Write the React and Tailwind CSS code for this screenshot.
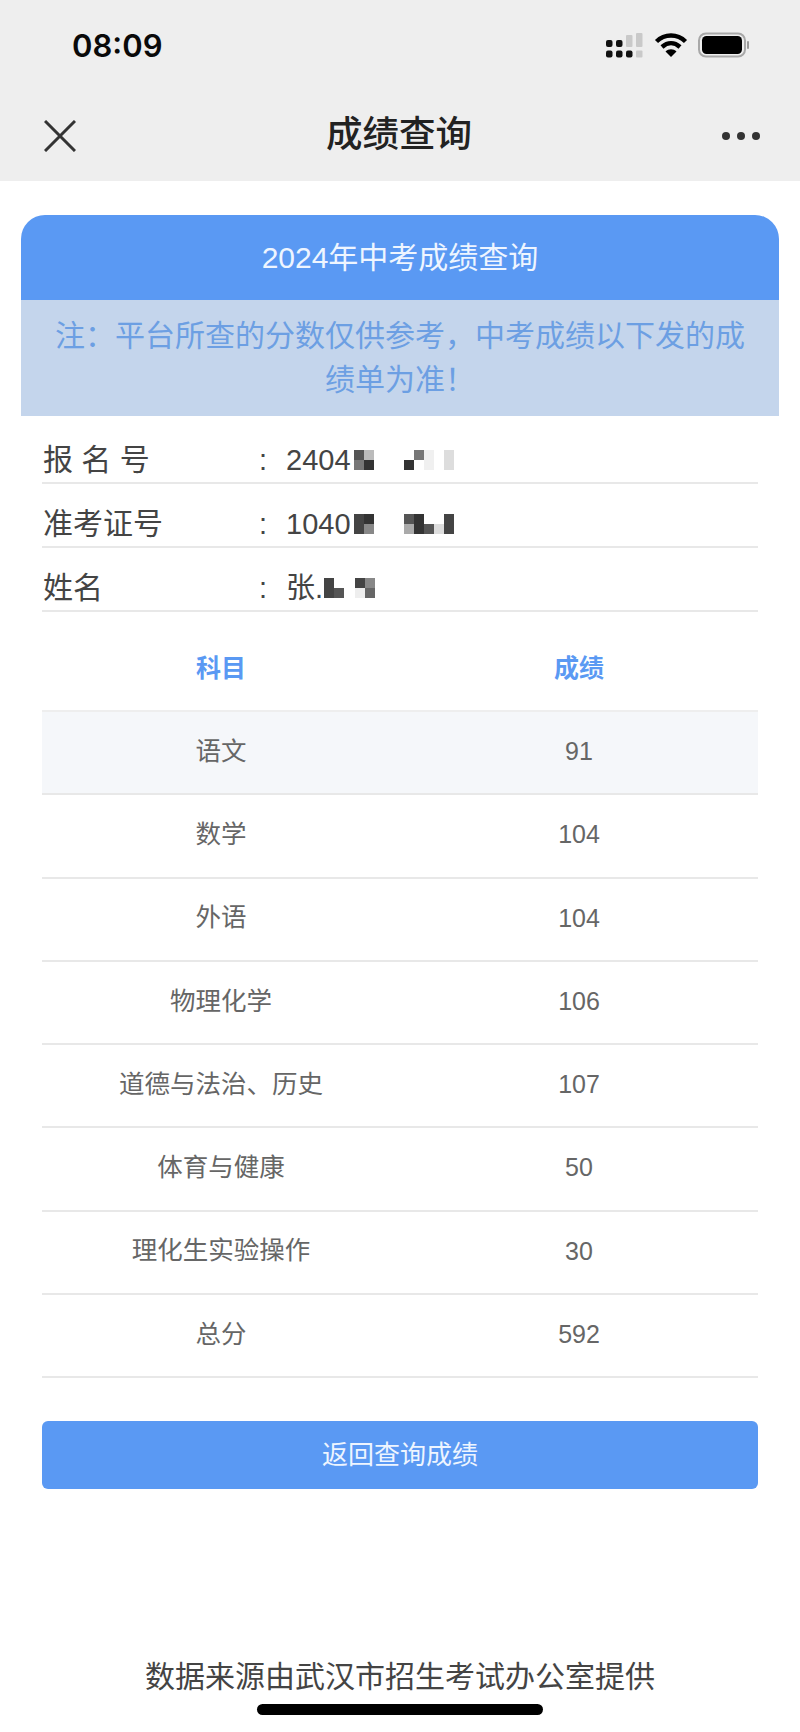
const rows = [
  ["语文", "91"],
  ["数学", "104"],
  ["外语", "104"],
  ["物理化学", "106"],
  ["道德与法治、历史", "107"],
  ["体育与健康", "50"],
  ["理化生实验操作", "30"],
  ["总分", "592"],
];

function Mosaic({ cols, cells, className = "" }) {
  return (
    <div className={`grid shrink-0 ${className}`} style={{ gridTemplateColumns: `repeat(${cols}, 10px)`, gridAutoRows: "10px" }}>
      {cells.map((c, i) => (
        <div key={i} style={{ backgroundColor: c }} />
      ))}
    </div>
  );
}

function InfoRow({ label, value, children }) {
  return (
    <div className="flex h-16 items-center border-b-2 border-[#e8e8e8] pt-[17px] text-[29px] leading-[40px] text-[#444444]">
      <div className="w-[217px] pl-[1px] text-[30px] text-[#444444]">{label}</div>
      <div className="w-[27px] text-[#444444]">:</div>
      <div className="flex items-center">
        <span>{value}</span>
        {children}
      </div>
    </div>
  );
}

export default function App() {
  return (
    <div
      className="flex h-[1732px] w-[800px] flex-col overflow-hidden bg-white"
      style={{ fontFamily: '"Liberation Sans", "Noto Sans CJK SC", sans-serif' }}
    >
      <header className="h-[181px] shrink-0 bg-[#eeeeee]">
        <div className="flex h-[90px] items-center justify-between pl-[72px] pr-[51px]">
          <span className="text-[31px] leading-none text-[#0a0a0a]" style={{ fontFamily: 'Inter, "Liberation Sans", sans-serif', fontWeight: 600 }}>08:09</span>
          <svg width="144" height="26" viewBox="0 0 144 26" fill="none">
            <g fill="#111">
              <rect x="1" y="8" width="6.5" height="7" rx="2" />
              <rect x="1" y="18.5" width="6.5" height="7" rx="2" />
              <rect x="11" y="8" width="6.5" height="7" rx="2" />
              <rect x="11" y="18.5" width="6.5" height="7" rx="2" />
              <rect x="21" y="18.5" width="6.5" height="7" rx="2" />
            </g>
            <g fill="#c9c9c9">
              <rect x="21" y="3" width="6.5" height="12" rx="1" />
              <rect x="31" y="1" width="6.5" height="14" rx="1" />
              <rect x="31" y="18.5" width="6.5" height="7" rx="1" />
            </g>
            <g stroke="#000" strokeWidth="4.4" strokeLinecap="butt">
              <path d="M51.5 9.5 C59.5 1.5 72.5 1.5 80.5 9.5" />
              <path d="M57 15 C62.5 10 69.5 10 75 15" />
            </g>
            <path d="M66 25 L60.5 19.5 C63.5 16.5 68.5 16.5 71.5 19.5 Z" fill="#000" />
            <rect x="94" y="1.5" width="46" height="23" rx="7" stroke="#a8a8a8" strokeWidth="2" />
            <rect x="97" y="4" width="40" height="18" rx="4.5" fill="#000" />
            <rect x="142" y="9" width="2" height="8" rx="1" fill="#9a9a9a" />
          </svg>
        </div>
        <div className="flex h-[91px] items-center justify-between pl-11 pr-10">
          <svg width="32" height="32" viewBox="0 0 32 32" fill="none" stroke="#333" strokeWidth="3">
            <path d="M1 1 L31 31 M31 1 L1 31" />
          </svg>
          <h1 className="text-[36.5px] font-medium leading-none text-[#222222]">成绩查询</h1>
          <div className="flex w-[38px] justify-between">
            <span className="size-[8px] rounded-full bg-[#333333]" />
            <span className="size-[8px] rounded-full bg-[#333333]" />
            <span className="size-[8px] rounded-full bg-[#333333]" />
          </div>
        </div>
      </header>

      <main className="mx-[21px] mt-[34px] flex-1">
        <div className="flex h-[85px] items-center justify-center rounded-t-[24px] bg-[#5a99f3] text-[30px] leading-none text-[#eef5ff]">
          2024年中考成绩查询
        </div>
        <div className="h-[116px] bg-[#c4d5ec] px-[30px] pt-[14px] text-center text-[30px] leading-[44px] text-[#6c9fe3]">
          {"注\uFF1A平台所查的分数仅供参考\uFF0C中考成绩以下发的成绩单为准\uFF01"}
        </div>

        <div className="mx-[21px]">
          <div className="mt-[4px]">
            <InfoRow label="报 名 号" value="2404">
              <Mosaic cols={2} className="ml-[3px]" cells={["#555555", "#bbbbbb", "#777777", "#333333"]} />
              <Mosaic cols={5} className="ml-[30px]" cells={["#ffffff", "#777777", "#f0f0f0", "#ffffff", "#dddddd", "#333333", "#ffffff", "#f0f0f0", "#ffffff", "#dddddd"]} />
            </InfoRow>
            <InfoRow label="准考证号" value="1040">
              <Mosaic cols={2} className="ml-[3px]" cells={["#444444", "#333333", "#444444", "#888888"]} />
              <Mosaic cols={5} className="ml-[30px]" cells={["#555555", "#333333", "#ffffff", "#ffffff", "#444444", "#aaaaaa", "#333333", "#555555", "#dddddd", "#444444"]} />
            </InfoRow>
            <InfoRow label="姓名" value="张.">
              <Mosaic cols={2} className="ml-[1px]" cells={["#444444", "#ffffff", "#444444", "#555555"]} />
              <Mosaic cols={2} className="ml-[11px]" cells={["#444444", "#888888", "#eeeeee", "#666666"]} />
            </InfoRow>
          </div>

          <div className="grid h-[100px] grid-cols-2 items-center border-b-2 border-[#eeeeee] pt-[14px] text-center text-[25px] font-bold leading-none text-[#5a99f3]">
            <div>科目</div>
            <div>成绩</div>
          </div>
          {rows.map(([name, score], i) => (
            <div
              key={name}
              className={`grid h-[83.25px] grid-cols-2 items-center border-b-2 border-[#e8e8e8] pb-[2px] text-center text-[25px] leading-none text-[#666666] ${i === 0 ? "bg-[#f5f7fa]" : ""}`}
            >
              <div className="text-[25.5px]">{name}</div>
              <div>{score}</div>
            </div>
          ))}

          <button className="mt-[43px] flex h-[68px] w-full items-center justify-center rounded-[6px] bg-[#5a99f3] text-[26px] leading-none text-[#eef5ff]">
            返回查询成绩
          </button>
        </div>
      </main>

      <footer className="flex shrink-0 flex-col items-center">
        <div className="text-center text-[30px] leading-[40px] text-[#444444]">数据来源由武汉市招生考试办公室提供</div>
        <div className="mb-[17px] mt-[7px] h-[11px] w-[286px] rounded-full bg-black" />
      </footer>
    </div>
  );
}
